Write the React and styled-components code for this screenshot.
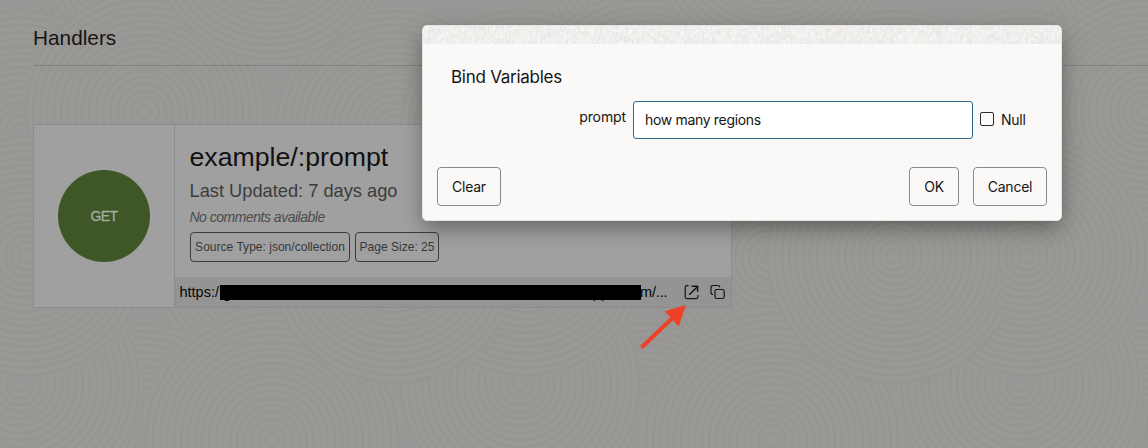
import React from "react";
import styled, { createGlobalStyle } from "styled-components";

const GlobalStyle = createGlobalStyle`
  * { box-sizing: border-box; }
  body { margin: 0; background: #999796; font-family: "Liberation Sans", Arial, sans-serif; }
`;

const Page = styled.div`
  position: relative;
  width: 1148px;
  height: 448px;
  overflow: hidden;
  background: #999796;
`;
const Backdrop = styled.svg`
  position: absolute;
  inset: 0;
`;
const Content = styled.main`
  position: relative;
  padding-left: 33px;
`;
const Heading = styled.h1`
  margin: 0 0 58px;
  height: 66px;
  padding-top: 26px;
  border-bottom: 1px solid #838281;
  font-size: 20.8px;
  line-height: 24px;
  font-weight: 400;
  color: #141414;
`;
const Card = styled.article`
  display: flex;
  width: 699px;
  height: 184px;
  border: 1px solid #8c8c8c;
  background: #a0a0a0;
`;
const MethodPane = styled.div`
  display: flex;
  align-items: center;
  justify-content: center;
  width: 141px;
  border-right: 1px solid #8c8c8c;
`;
const Method = styled.div`
  width: 92px;
  height: 92px;
  border-radius: 50%;
  background: #3f5726;
  color: #a6aba1;
  font-size: 14px;
  letter-spacing: -0.6px;
  line-height: 92px;
  text-align: center;
  -webkit-text-stroke: 0.3px #a6aba1;
`;
const Details = styled.div`
  flex: 1;
  display: flex;
  flex-direction: column;
`;
const Info = styled.div`
  height: 152px;
  padding: 16px 15px 0;
`;
const Name = styled.div`
  margin-left: -0.5px;
  font-size: 26.7px;
  line-height: 32px;
  color: #111;
`;
const Updated = styled.div`
  margin-top: 7px;
  margin-left: -0.5px;
  font-size: 18.25px;
  line-height: 22px;
  color: #3c3c3c;
`;
const Comment = styled.div`
  margin-top: 6px;
  margin-left: -0.5px;
  font-size: 14px;
  line-height: 18px;
  letter-spacing: -0.49px;
  font-style: italic;
  color: #4c4c4c;
`;
const Tags = styled.div`
  display: flex;
  gap: 5px;
  margin-top: 6px;
`;
const Tag = styled.span`
  width: ${(p) => p.$width}px;
  height: 30px;
  border: 1px solid #3c3c3c;
  border-radius: 4px;
  font-size: 12.05px;
  line-height: 28px;
  text-align: center;
  white-space: nowrap;
  color: #383838;
`;
const UrlBar = styled.div`
  display: flex;
  align-items: center;
  height: 30px;
  padding: 0 6px 0 4px;
  background: #949494;
  font-size: 14.5px;
  line-height: 18px;
  color: #050505;
`;
const Scheme = styled.span`
  width: 41px;
  padding-left: 0.5px;
`;
const Redacted = styled.span`
  display: flex;
  justify-content: space-between;
  width: 421px;
  height: 15px;
  padding: 0 32px 0 3px;
  background: #000;
  color: #000;
  line-height: 17px;
`;
const Tail = styled.span`
  width: 43px;
  margin-left: -1px;
  letter-spacing: -0.15px;
`;
const Actions = styled.span`
  display: flex;
  margin-left: auto;
  gap: 11px;
`;
const Icon = styled.svg`
  display: block;
  width: 15px;
  height: 16px;
  fill: none;
  stroke: #161616;
  stroke-width: 1.2;
`;
const Pointer = styled.svg`
  position: absolute;
  left: 636px;
  top: 300px;
`;
const Dialog = styled.section`
  position: absolute;
  left: 422px;
  top: 25px;
  width: 640px;
  height: 196px;
  display: flex;
  flex-direction: column;
  border: 1px solid #e6e4e2;
  border-radius: 5px;
  overflow: hidden;
  background: #faf9f7;
  box-shadow: 0 8px 22px -2px rgba(0, 0, 0, 0.4);
  font-family: Inter, sans-serif;
  color: #161513;
  font-size: 14px;
`;
const Texture = styled.svg`
  display: block;
  flex: none;
`;
const Title = styled.h2`
  margin: 21px 0 0 28px;
  font-size: 17px;
  line-height: 24px;
  font-weight: 400;
  letter-spacing: -0.26px;
`;
const Form = styled.div`
  display: flex;
  align-items: flex-start;
  height: 38px;
  margin-top: 12px;
`;
const Label = styled.label`
  width: 203px;
  line-height: 32px;
  text-align: right;
  letter-spacing: -0.1px;
`;
const Field = styled.div`
  width: 340px;
  height: 38px;
  margin-left: 7px;
  padding-left: 11px;
  border: 1px solid #2b6a91;
  border-radius: 3px;
  background: #fff;
  line-height: 36px;
  letter-spacing: -0.33px;
`;
const Check = styled.span`
  width: 14px;
  height: 14px;
  margin: 11px 7px 0;
  border: 1.5px solid #2b2a28;
  border-radius: 2px;
`;
const CheckText = styled.span`
  line-height: 38px;
  letter-spacing: -0.25px;
`;
const Footer = styled.div`
  display: flex;
  margin-top: 28px;
  padding: 0 14px;
`;
const Button = styled.button`
  width: ${(p) => p.$width}px;
  height: 39px;
  margin-left: ${(p) => p.$gap || "0"};
  padding: 0;
  border: 1px solid #8b8a88;
  border-radius: 4px;
  background: transparent;
  color: #161513;
  font: 400 14px Inter, sans-serif;
  letter-spacing: -0.25px;
`;

const discs = [
  [270, -60, 122], [20, -130, 120], [145, -50, 120], [395, 130, 122],
  [20, 130, 120], [145, 112, 122], [270, -60, 122], [270, 258, 120],
  [141, 450, 128], [272, 440, 132], [20, 384, 122], [-106, 256, 124], [26, 256, 124], [394, 256, 126],
];

function Swirls() {
  const rings = (r) => Array.from({ length: Math.floor(r / 7) }, (_, i) => (i + 1) * 7);
  return (
    <Backdrop width="1148" height="448">
      <defs>
        <pattern id="swirl" width="500" height="448" patternUnits="userSpaceOnUse">
          {discs.map(([x, y, r], n) =>
            [0, 500].map((dx) => (
              <g key={n + "-" + dx} fill="none" stroke="#959490" strokeWidth="2.2">
                <circle cx={x + dx} cy={y} r={r} fill="#9a9897" stroke="none" />
                {rings(r).map((q) => <circle key={q} cx={x + dx} cy={y} r={q} />)}
              </g>
            ))
          )}
        </pattern>
      </defs>
      <rect width="1148" height="448" fill="url(#swirl)" />
    </Backdrop>
  );
}

function Grain() {
  let seed = 17;
  const rnd = () => ((seed = (seed * 16807) % 2147483647) / 2147483647);
  const marks = Array.from({ length: 1900 }, () => [rnd() * 638, rnd() * 20 - 2, rnd() * 0.6 - 0.3, 1.5 + rnd() * 2.5, rnd()]);
  return (
    <Texture width="638" height="18">
      <rect width="638" height="18" fill="#f0efed" />
      {marks.map(([x, y, dx, h, c], i) => (
        <path key={i} d={`M${x.toFixed(1)} ${y.toFixed(1)}l${dx.toFixed(1)} ${h.toFixed(1)}`} stroke={c > 0.5 ? "#e9e7e5" : "#f7f6f4"} strokeWidth="1.4" />
      ))}
    </Texture>
  );
}

export default function App() {
  return (
    <Page>
      <GlobalStyle />
      <Swirls />
      <Content>
        <Heading>Handlers</Heading>
        <Card>
          <MethodPane><Method>GET</Method></MethodPane>
          <Details>
            <Info>
              <Name>example/:prompt</Name>
              <Updated>Last Updated: 7 days ago</Updated>
              <Comment>No comments available</Comment>
              <Tags>
                <Tag $width={160}>Source Type: json/collection</Tag>
                <Tag $width={84}>Page Size: 25</Tag>
              </Tags>
            </Info>
            <UrlBar>
              <Scheme>https:/</Scheme>
              <Redacted><span>g</span><span>pp</span></Redacted>
              <Tail>m/...</Tail>
              <Actions>
                <Icon viewBox="0 0 15 16">
                  <path d="M4.500 1.600H3A1.800 1.800 0 0 0 1.200 3.400V12.800A1.800 1.800 0 0 0 3 14.600H12.200A1.800 1.800 0 0 0 14 12.800V11" />
                  <path strokeWidth="1.5" d="M5.200 10.800L13.300 2.700M7.500 2.200H13.600V7.800" />
                </Icon>
                <Icon viewBox="0 0 15 16">
                  <rect x="5" y="5.500" width="9.200" height="9" rx="1.800" />
                  <path d="M3 10.500A1.800 1.800 0 0 1 1 8.700V3.300A1.800 1.800 0 0 1 2.800 1.500H8A1.800 1.800 0 0 1 9.800 3.300" />
                </Icon>
              </Actions>
            </UrlBar>
          </Details>
        </Card>
      </Content>
      <Pointer width="52" height="50">
        <path d="M5.500 47.500L38 16.500" stroke="#ee4128" strokeWidth="4" />
        <path d="M50 5L28.700 11.200L42.700 26.500Z" fill="#ee4128" />
      </Pointer>
      <Dialog>
        <Grain />
        <Title>Bind Variables</Title>
        <Form>
          <Label>prompt</Label>
          <Field>how many regions</Field>
          <Check />
          <CheckText>Null</CheckText>
        </Form>
        <Footer>
          <Button $width={64}>Clear</Button>
          <Button $width={50} $gap="auto">OK</Button>
          <Button $width={74} $gap="14px">Cancel</Button>
        </Footer>
      </Dialog>
    </Page>
  );
}
